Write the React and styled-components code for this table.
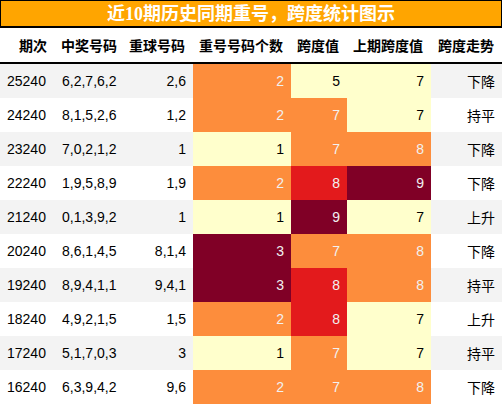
import styled, { createGlobalStyle } from 'styled-components';

const GlobalStyle = createGlobalStyle`
	html, body {
		margin: 0;
		padding: 0;
		background: #fff;
	}
	body {
		font-family: 'Liberation Sans', 'Noto Sans CJK SC', sans-serif;
	}
`;

const palette = {
	light: { bg: '#ffffcc', fg: '#000' },
	orange: { bg: '#fd8d3c', fg: '#f1f1f1' },
	red: { bg: '#e31a1c', fg: '#f1f1f1' },
	dark: { bg: '#800026', fg: '#f1f1f1' },
};

const countTone = { 1: 'light', 2: 'orange', 3: 'dark' };
const spanTone = { 5: 'light', 7: 'orange', 8: 'red', 9: 'dark' };
const prevTone = { 7: 'light', 8: 'orange', 9: 'dark' };

const rows = [
	['25240', '6,2,7,6,2', '2,6', 2, 5, 7, '下降'],
	['24240', '8,1,5,2,6', '1,2', 2, 7, 7, '持平'],
	['23240', '7,0,2,1,2', '1', 1, 7, 8, '下降'],
	['22240', '1,9,5,8,9', '1,9', 2, 8, 9, '下降'],
	['21240', '0,1,3,9,2', '1', 1, 9, 7, '上升'],
	['20240', '8,6,1,4,5', '8,1,4', 3, 7, 8, '下降'],
	['19240', '8,9,4,1,1', '9,4,1', 3, 8, 8, '持平'],
	['18240', '4,9,2,1,5', '1,5', 2, 8, 7, '上升'],
	['17240', '5,1,7,0,3', '3', 1, 7, 7, '持平'],
	['16240', '6,3,9,4,2', '9,6', 2, 7, 8, '下降'],
];

const columns = [
	{ title: '期次', width: 55 },
	{ title: '中奖号码', width: 70 },
	{ title: '重球号码', width: 68 },
	{ title: '重号号码个数', width: 98 },
	{ title: '跨度值', width: 56 },
	{ title: '上期跨度值', width: 84 },
	{ title: '跨度走势', width: 71 },
];

const Page = styled.div`
	width: 502px;
`;

const TitleBar = styled.div`
	height: 25px;
	background: #ffa500;
	border: 1px solid #000;
	border-bottom-width: 2px;
	box-sizing: content-box;
	width: 500px;
	display: flex;
	align-items: center;
	justify-content: center;
	color: #fff;
	font-family: 'Liberation Serif', 'Noto Sans CJK SC', serif;
	font-weight: bold;
	font-size: 18px;
	line-height: 1;
`;

const Table = styled.table`
	width: 502px;
	border-collapse: collapse;
	table-layout: fixed;
	font-size: 14px;
	color: #000;
`;

const HeadCell = styled.th`
	height: 34px;
	padding: 0 8px 0 0;
	text-align: right;
	font-weight: bold;
	font-size: 14px;
	border-bottom: 2px solid #000;
	white-space: nowrap;
	vertical-align: middle;
`;

const Row = styled.tr`
	background: ${(p) => (p.$odd ? '#f3f3f3' : '#fff')};
`;

const Cell = styled.td`
	height: 34px;
	padding: ${(p) => (p.$left ? '0 0 0 7px' : '0 7px 0 0')};
	text-align: ${(p) => (p.$left ? 'left' : 'right')};
	background: ${(p) => (p.$tone ? palette[p.$tone].bg : 'transparent')};
	color: ${(p) => (p.$tone ? palette[p.$tone].fg : '#000')};
	white-space: nowrap;
	vertical-align: middle;
`;

export default function App() {
	return (
		<Page>
			<GlobalStyle />
			<TitleBar>近10期历史同期重号，跨度统计图示</TitleBar>
			<Table>
				<colgroup>
					{columns.map((c) => (
						<col key={c.title} style={{ width: c.width }} />
					))}
				</colgroup>
				<thead>
					<tr>
						{columns.map((c) => (
							<HeadCell key={c.title}>{c.title}</HeadCell>
						))}
					</tr>
				</thead>
				<tbody>
					{rows.map((r, i) => (
						<Row key={r[0]} $odd={i % 2 === 0}>
							<Cell $left>{r[0]}</Cell>
							<Cell $left>{r[1]}</Cell>
							<Cell>{r[2]}</Cell>
							<Cell $tone={countTone[r[3]]}>{r[3]}</Cell>
							<Cell $tone={spanTone[r[4]]}>{r[4]}</Cell>
							<Cell $tone={prevTone[r[5]]}>{r[5]}</Cell>
							<Cell>{r[6]}</Cell>
						</Row>
					))}
				</tbody>
			</Table>
		</Page>
	);
}
